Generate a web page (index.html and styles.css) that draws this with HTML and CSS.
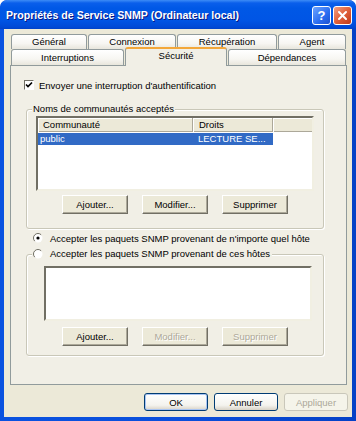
FILE: index.html
```html
<!DOCTYPE html>
<html>
<head>
    <title>Propriétés de Service SNMP (Ordinateur local)</title>
    <link rel="stylesheet" href="styles.css">
</head>
<body>
    <div class="window">
        <div class="titlebar">
            <span class="title">Propriétés de Service SNMP (Ordinateur local)</span>
            <div class="title-buttons">
                <span class="tb-btn tb-help">?</span>
                <span class="tb-btn tb-close">
                    <svg width="11" height="11" viewBox="0 0 11 11">
                        <path d="M2 2 L9 9 M9 2 L2 9" stroke="#fff" stroke-width="2" stroke-linecap="round"/>
                    </svg>
                </span>
            </div>
        </div>

        <div class="client">
            <div class="tabs">
                <div class="tab-row">
                    <div class="tab tab-general">Général</div>
                    <div class="tab tab-connexion">Connexion</div>
                    <div class="tab tab-recup">Récupération</div>
                    <div class="tab tab-agent">Agent</div>
                </div>
                <div class="tab-row front">
                    <div class="tab tab-interruptions">Interruptions</div>
                    <div class="tab tab-securite selected">Sécurité</div>
                    <div class="tab tab-dependances">Dépendances</div>
                </div>
            </div>

            <div class="panel">
                <div class="check-row">
                    <span class="checkbox">
                        <svg width="8" height="8" viewBox="0 0 8 8">
                            <path d="M1 3.5 L3 5.5 L7 1.5" stroke="#000" stroke-width="1.7" fill="none"/>
                        </svg>
                    </span>
                    Envoyer une interruption d'authentification
                </div>

                <div class="group group-communities">
                    <span class="legend">Noms de communautés acceptés</span>
                    <div class="listview">
                        <div class="lv-header">
                            <span class="col col-name">Communauté</span>
                            <span class="col col-rights">Droits</span>
                            <span class="col col-rest"></span>
                        </div>
                        <div class="lv-row selected">
                            <span class="cell cell-name">public</span>
                            <span class="cell cell-rights">LECTURE SE...</span>
                        </div>
                    </div>
                    <div class="button-row">
                        <button class="btn">Ajouter...</button>
                        <button class="btn">Modifier...</button>
                        <button class="btn">Supprimer</button>
                    </div>
                </div>

                <div class="radio-row radio-any">
                    <span class="radio">
                        <svg width="10" height="10" viewBox="0 0 10 10">
                            <circle cx="5" cy="5" r="4.5" fill="#fff"/>
                            <path d="M1.8 8.2 A4.5 4.5 0 0 1 8.2 1.8" stroke="#716F64" fill="none"/>
                            <circle cx="5" cy="5" r="1.6" fill="#000"/>
                        </svg>
                    </span>
                    Accepter les paquets SNMP provenant de n'importe quel hôte
                </div>

                <div class="group group-hosts">
                    <span class="legend radio-row">
                        <span class="radio">
                            <svg width="10" height="10" viewBox="0 0 10 10">
                                <circle cx="5" cy="5" r="4.5" fill="#fff"/>
                                <path d="M1.8 8.2 A4.5 4.5 0 0 1 8.2 1.8" stroke="#716F64" fill="none"/>
                            </svg>
                        </span>
                        Accepter les paquets SNMP provenant de ces hôtes
                    </span>
                    <div class="listbox"></div>
                    <div class="button-row">
                        <button class="btn">Ajouter...</button>
                        <button class="btn" disabled>Modifier...</button>
                        <button class="btn" disabled>Supprimer</button>
                    </div>
                </div>
            </div>

            <div class="dialog-buttons">
                <button class="dbtn default">OK</button>
                <button class="dbtn">Annuler</button>
                <button class="dbtn" disabled>Appliquer</button>
            </div>
        </div>
    </div>
</body>
</html>
```

FILE: styles.css
```css
body {
    margin: 0;
    padding: 0;
    font-family: 'Liberation Sans', Arial, sans-serif;
    font-size: 9.5px;
    color: #000;
    background-color: #fff;
}
.window {
    width: 356px;
    height: 421px;
    box-sizing: border-box;
    padding: 0 4px 4px;
    border-radius: 7px 7px 0 0;
    background: linear-gradient(to right, #0A52E0, #0B4FDB 50%, #0541C6);
    display: flex;
    flex-direction: column;
    overflow: hidden;
}
.titlebar {
    height: 29px;
    margin: 0 -4px;
    padding: 0 4px 0 6px;
    display: flex;
    align-items: center;
    justify-content: space-between;
    background: linear-gradient(#3D8CF6 0, #0A5FEB 3px, #0058E6 8px, #0055E5 20px, #0049D6 27px, #0042C8);
    border-radius: 7px 7px 0 0;
}
.title {
    color: white;
    font-weight: bold;
    font-size: 10.6px;
    text-shadow: 1px 1px 0 #0A1883;
    padding-top: 1px;
}
.title-buttons {
    display: flex;
    gap: 2px;
    margin-top: 1px;
}
.tb-btn {
    width: 19px;
    height: 19px;
    box-sizing: border-box;
    border: 1px solid #fff;
    border-radius: 3px;
    display: flex;
    align-items: center;
    justify-content: center;
    color: white;
    font-weight: bold;
    font-size: 13px;
}
.tb-help {
    background: linear-gradient(135deg, #6DA4FF, #2A6CF0 60%, #1B50D0);
}
.tb-close {
    background: linear-gradient(135deg, #F0A083, #E0603A 50%, #C0391A);
}
.client {
    flex: 1;
    background-color: #ECE9D8;
    display: flex;
    flex-direction: column;
}
.tabs {
    margin: 5px 0 0 7px;
}
.tab-row {
    display: flex;
    gap: 1px;
    height: 15px;
}
.tab-row.front {
    height: 16px;
}
.tab {
    box-sizing: border-box;
    border: 1px solid #919B9C;
    border-bottom: none;
    border-radius: 3px 3px 0 0;
    background: linear-gradient(#FFFFFF, #F7F6F2 60%, #E8E6DC);
    text-align: center;
    line-height: 14px;
}
.tab-general { width: 76px; }
.tab-connexion { width: 88px; }
.tab-recup { width: 100px; }
.tab-agent { width: 68px; }
.tab-interruptions { width: 113px; }
.tab-securite { width: 102px; }
.tab-dependances { width: 118px; }
.tab-row.front .tab {
    line-height: 15px;
}
.tab.selected {
    position: relative;
    z-index: 1;
    margin-top: -2px;
    height: 19px;
    border-top: 2px solid #F3A73A;
    background: #F1EFE6;
    line-height: 13px !important;
}
.panel {
    margin: 0 5px 0 6px;
    height: 320px;
    box-sizing: border-box;
    border: 1px solid #919B9C;
    background-color: #F1EFE6;
}
.check-row {
    margin: 13px 0 0 13px;
    height: 12px;
    display: flex;
    align-items: center;
    gap: 5px;
}
.checkbox {
    width: 10px;
    height: 10px;
    box-sizing: border-box;
    border: 1px solid;
    border-color: #716F64 #fff #fff #716F64;
    background: white;
    display: flex;
    align-items: center;
    justify-content: center;
}
.group {
    margin: 18px 22px 0 15px;
    border: 1px solid #C9C7B8;
    border-radius: 3px;
    box-shadow: 1px 1px 0 #fff, inset 1px 1px 0 #fff;
}
.legend {
    display: block;
    width: fit-content;
    margin: -7px 0 0 5px;
    padding: 0 1px;
    line-height: 12px;
    background-color: #F1EFE6;
}
.listview {
    margin: 1px 0 0 9px;
    width: 278px;
    height: 75px;
    box-sizing: border-box;
    border: 2px solid;
    border-color: #716F64 #F1EFE2 #F1EFE2 #716F64;
    background: white;
}
.lv-header {
    display: flex;
    height: 14px;
    background-color: #ECE9D8;
}
.col {
    box-sizing: border-box;
    height: 14px;
    line-height: 13px;
    padding-left: 5px;
    border-right: 1px solid #ACA899;
    box-shadow: inset 1px 1px 0 #fff, inset 0 -1px 0 #ACA899;
}
.col-name { width: 155px; }
.col-rights { width: 80px; padding-left: 6px; }
.col-rest { flex: 1; border-right: none; }
.lv-row {
    display: flex;
    height: 12px;
    line-height: 12px;
    margin-top: 1px;
}
.lv-row.selected {
    width: 235px;
    background-color: #316AC5;
    color: white;
}
.cell-name {
    width: 155px;
    padding-left: 2px;
}
.cell-rights {
    padding-left: 3px;
}
.button-row {
    display: flex;
    gap: 14px;
    margin-top: 4px;
    padding-left: 35px;
}
.group-communities .button-row {
    padding-bottom: 14px;
}
.btn {
    width: 66px;
    height: 19px;
    padding: 0;
    font-family: inherit;
    font-size: 9.5px;
    background-color: #ECE9D8;
    border: 1px solid;
    border-color: #fff #716F64 #716F64 #fff;
    box-shadow: inset -1px -1px 0 #ACA899;
    border-radius: 0;
    color: #000;
}
.btn:disabled {
    color: #ACA899;
    text-shadow: 1px 1px 0 #fff;
}
.radio-row {
    display: flex;
    align-items: center;
    gap: 7px;
    height: 12px;
}
.radio-any {
    margin: 3px 0 0 22px;
}
.radio {
    width: 10px;
    height: 10px;
    display: flex;
}
.group-hosts {
    margin-top: 10px;
}
.group-hosts .legend {
    display: flex;
    padding: 0 2px 0 1px;
}
.listbox {
    margin: 6px 0 0 17px;
    width: 268px;
    height: 55px;
    box-sizing: border-box;
    border: 2px solid;
    border-color: #716F64 #F1EFE2 #F1EFE2 #716F64;
    background: white;
}
.group-hosts .button-row {
    margin-top: 6px;
    padding-bottom: 9px;
}
.dialog-buttons {
    display: flex;
    justify-content: flex-end;
    gap: 6px;
    margin-top: 8px;
    padding-right: 4px;
}
.dbtn {
    width: 64px;
    height: 18px;
    padding: 0;
    font-family: inherit;
    font-size: 9.5px;
    border: 1px solid #003C74;
    border-radius: 3px;
    background: linear-gradient(#FFFFFF, #F4F3EE 70%, #D8D2C6);
    color: #000;
}
.dbtn.default {
    box-shadow: inset 0 0 0 1px #A9C4F2;
}
.dbtn:disabled {
    border-color: #C9C7BA;
    background: #F5F4EA;
    color: #ACA899;
}
```
